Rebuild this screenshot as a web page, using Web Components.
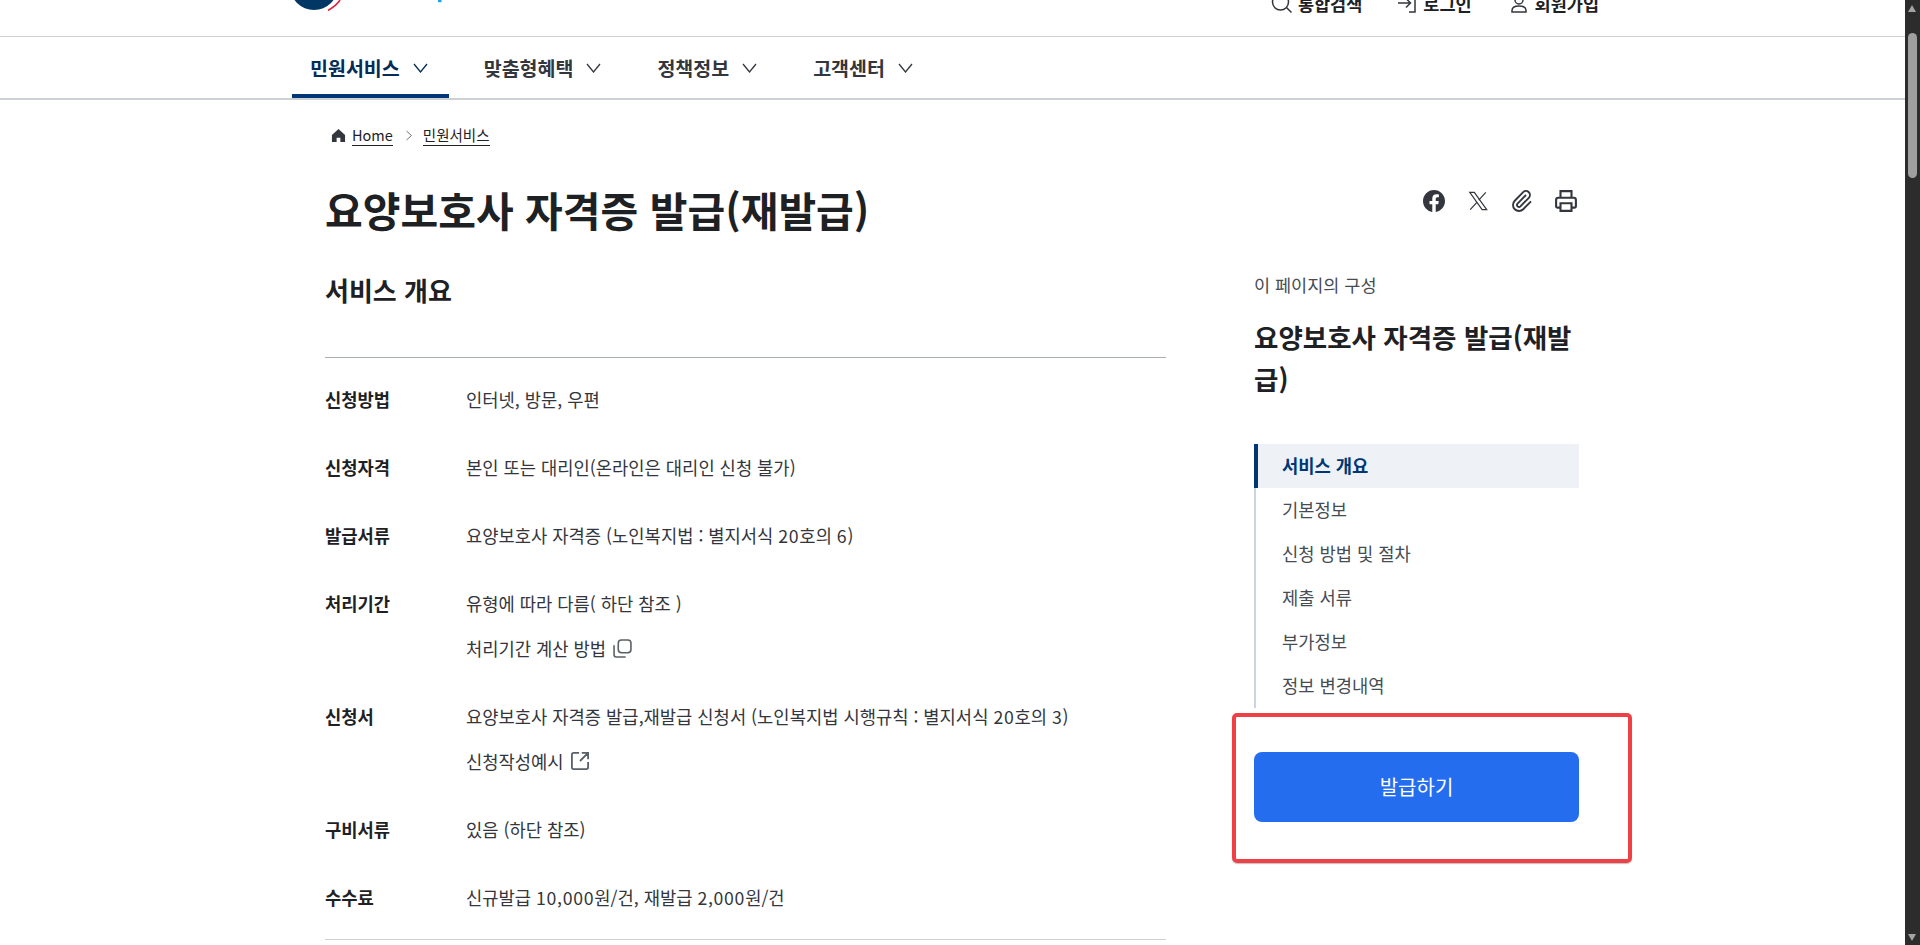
<!DOCTYPE html>
<html lang="ko"><head><meta charset="utf-8"><title>요양보호사 자격증 발급(재발급)</title>
<style>
html,body{margin:0;padding:0;height:945px;overflow:hidden;background:#fff}
body{font-family:"Noto Sans CJK KR","Noto Sans",sans-serif;color:#1e2124;display:flex}
.n{letter-spacing:.7px}
</style></head><body>
<template id="t-header"><style>
:host{display:block;height:36px;border-bottom:1px solid #cdd1d5;overflow:hidden;box-sizing:content-box}
.in{width:1321px;margin-left:292px;height:36px;display:flex;justify-content:space-between;align-items:flex-start}
svg.logo{display:block;width:160px;height:11px;flex:none}
.util{display:flex;gap:35px;height:36px;align-items:flex-end;padding:0 14px 19px 0;box-sizing:border-box}
.i{display:flex;align-items:center;gap:4px;font-size:17.5px;line-height:26px;font-weight:700;color:#1e2124;white-space:nowrap}
.i:first-child{margin-right:-2px}
.i svg{width:24px;height:24px;flex:none;fill:none;stroke:#33363d;stroke-width:1.5}
</style><div class="in">
<svg class="logo" viewBox="0 0 160 11"><circle cx="22" cy="-14" r="24" fill="#003764"/><path d="M36 10.5Q45 5 48 0" stroke="#e0263b" stroke-width="1.6" fill="none"/><rect x="146" y="0" width="3.5" height="2.2" fill="#1ea3e0"/></svg>
<div class="util">
<span class="i"><svg viewBox="0 0 24 24"><circle cx="10.5" cy="10" r="8"/><path d="M16.5 15.5l5 5"/></svg>통합검색</span>
<span class="i"><svg viewBox="0 0 24 24"><path d="M3 11h12M11 6.5l4.500 4.500-4.500 4.500M14 20h6V3h-6"/></svg>로그인</span>
<span class="i"><svg viewBox="0 0 24 24"><circle cx="12" cy="8" r="4"/><path d="M5 20h14v-1.500c0-3-3-4.500-7-4.500s-7 1.500-7 4.500z"/></svg>회원가입</span>
</div></div></template>

<template id="t-mainnav"><style>
:host{display:block;height:61px;border-bottom:2px solid #cdd1d5}
nav{display:flex;gap:17px;width:1321px;margin-left:292px;height:61px}
</style><nav><slot></slot></nav></template>

<template id="t-navitem"><style>
:host{display:flex;align-items:center;gap:13px;height:61px;padding:0 21px 0 18px;box-sizing:border-box;font-size:19.500px;font-weight:600;color:#33363d;white-space:nowrap}
:host([active]){color:#052b57;box-shadow:inset 0 -4px 0 #003675}
svg{width:15px;height:10px;fill:none;stroke:currentColor;stroke-width:1.300}
</style><span><slot></slot></span><svg viewBox="0 0 15 10"><path d="M1 1l6.500 8L14 1"/></svg></template>

<template id="t-crumb"><style>
:host{display:flex;align-items:center;height:26px;font-size:14.500px;color:#1e2124;white-space:nowrap;padding-left:6px}
svg{flex:none}
a{color:inherit;text-decoration:none;border-bottom:1px solid #1e2124;line-height:20px;display:block}
.h{width:15px;height:15px;fill:#33363d;margin-right:6px}
.c{width:8px;height:11px;fill:none;stroke:#6d7882;stroke-width:1;margin:0 10px 0 12px}
</style><svg class="h" viewBox="0 0 16 16"><path d="M8 1l7 6.500V15h-5v-4.500H6V15H1V7.500z"/></svg><a>Home</a><svg class="c" viewBox="0 0 8 11"><path d="M1.500 1l5 4.500-5 4.500"/></svg><a>민원서비스</a></template>

<template id="t-share"><style>
:host{display:flex;gap:22px;align-items:center;margin:11px 2px 0 0}
svg{display:block;width:22px;height:22px;fill:#33363d}
.o{fill:none;stroke:#33363d;stroke-width:1.900}
.x{fill:none;stroke:#33363d;stroke-width:1.300}
</style>
<svg viewBox="0 0 24 24"><path d="M24 12.070C24 5.410 18.630 0 12 0S0 5.410 0 12.070c0 6.020 4.390 11.010 10.130 11.930v-8.440H7.080v-3.490h3.040V9.410c0-3.020 1.800-4.700 4.540-4.700 1.310 0 2.680.24 2.680.24v2.970h-1.500c-1.500 0-1.960.93-1.960 1.890v2.260h3.320l-.53 3.500h-2.800V24C19.620 23.080 24 18.090 24 12.070"/></svg>
<svg class="x" viewBox="0 0 24 24"><path d="M3 2.500h5L21.500 21.500h-5zM20.500 2.500l-7.700 8.500M11 13.200l-7.500 8.300"/></svg>
<svg class="o" viewBox="1 1 22 22"><path d="M16 6l-8.414 8.586a2 2 0 0 0 2.828 2.828l8.414-8.586a4 4 0 0 0-5.656-5.656l-8.415 8.585a6 6 0 1 0 8.486 8.486L21 12.300"/></svg>
<svg class="o" viewBox="2 2 20 20"><path d="M7 9V3h10v6M7 18H4a1 1 0 0 1-1-1v-6a2 2 0 0 1 2-2h14a2 2 0 0 1 2 2v6a1 1 0 0 1-1 1h-3M7 14h10v7H7z"/></svg></template>

<template id="t-row"><style>
:host{display:grid;grid-template-columns:141px 1fr;padding:21px 0;font-size:17.700px;line-height:26px;color:#1e2124}
.l{font-weight:700}
.v{display:flex;flex-direction:column;gap:19px;color:#33363d}
</style><div class="l"><slot name="label"></slot></div><div class="v"><slot></slot></div></template>

<template id="t-line"><style>
:host{display:flex;align-items:center;gap:7px;white-space:pre}
</style><span><slot></slot></span><slot name="icon"></slot></template>

<template id="t-table"><style>
:host{display:block;border-top:1px solid #a9afb5;border-bottom:1px solid #cdd1d5;padding:7px 0 8px}
</style><slot></slot></template>

<template id="t-toc"><style>
:host{display:block;border-left:2px solid #ccd6e3;height:264px}
</style><slot></slot></template>

<template id="t-tocitem"><style>
:host{display:block;height:44px;line-height:42px;font-size:17.700px;color:#464c53;padding-left:26px;box-sizing:border-box}
:host([active]){background:#eef1f5;color:#003675;font-weight:700;margin-left:-2px;border-left:4px solid #003675;padding-left:24px}
</style><slot></slot></template>

<template id="t-button"><style>
:host{display:block;position:relative;height:70px;margin-top:44px;background:#256def;border-radius:8px;color:#fff;font-size:20px;line-height:70px;text-align:center}
.mark{position:absolute;left:-22px;right:-53px;top:-39px;bottom:-41px;border:4px solid #ef4045;border-radius:5px;box-sizing:border-box;box-shadow:0 1px 1px rgba(0,0,0,.25)}
</style><slot></slot><span class="mark"></span></template>

<template id="t-scroll"><style>
:host{display:block;flex:none;width:15px;height:945px;background:#2c2c2c;position:relative}
.u,.d{width:0;height:0;border:4.500px solid transparent;position:absolute;left:3px}
.u{border-bottom:7px solid #a3a3a3;border-top-width:0;top:5px}
.d{bottom:4px;border-top:7px solid #a3a3a3;border-bottom-width:0}
.th{position:absolute;left:3px;width:9px;top:33px;height:145px;border-radius:5px;background:#9f9f9f}
</style><span class="u"></span><span class="th"></span><span class="d"></span></template>

<template id="t-page"><style>
:host{display:block;flex:none;width:1905px;height:945px;overflow:hidden;background:#fff}
.c{width:1321px;margin-left:292px;padding:0 34px 0 33px;box-sizing:border-box}
.b{padding-top:22px}
.tr{display:flex;justify-content:space-between;align-items:flex-start;margin-top:31px;height:60px}
h1{margin:0;font-size:41px;line-height:60px;font-weight:700;color:#1e2124;white-space:nowrap}
.g{display:grid;grid-template-columns:841px 325px;justify-content:space-between;margin-top:34px}
h2{margin:0 0 50px;font-size:26px;line-height:34px;font-weight:700;color:#1e2124}
.lab{font-size:17.500px;line-height:24px;color:#464c53}
h3{margin:19px 0 44px;font-size:26.500px;line-height:42px;font-weight:700;color:#1e2124;word-break:break-all}
</style><slot name="top"></slot><div class="c"><div class="b"><slot name="crumb"></slot></div>
<div class="tr"><h1>요양보호사 자격증 발급(재발급)</h1><slot name="share"></slot></div>
<div class="g"><main><h2>서비스 개요</h2><slot name="table"></slot></main>
<aside><div class="lab">이 페이지의 구성</div><h3>요양보호사 자격증 발급(재발급)</h3><slot name="toc"></slot><slot name="cta"></slot></aside></div></div></template>

<gov-page>
<gov-header slot="top"></gov-header>
<gov-mainnav slot="top"><gov-navitem active>민원서비스</gov-navitem><gov-navitem>맞춤형혜택</gov-navitem><gov-navitem>정책정보</gov-navitem><gov-navitem>고객센터</gov-navitem></gov-mainnav>
<gov-crumb slot="crumb"></gov-crumb>
<gov-share slot="share"></gov-share>
<gov-table slot="table">
<gov-row><span slot="label">신청방법</span><gov-line>인터넷, 방문, 우편</gov-line></gov-row>
<gov-row><span slot="label">신청자격</span><gov-line>본인 또는 대리인(온라인은 대리인 신청 불가)</gov-line></gov-row>
<gov-row><span slot="label">발급서류</span><gov-line>요양보호사 자격증 (노인복지법 : 별지서식 <span class="n">20</span>호의 <span class="n">6</span>)</gov-line></gov-row>
<gov-row><span slot="label">처리기간</span><gov-line>유형에 따라 다름( 하단 참조 )</gov-line><gov-line>처리기간 계산 방법<svg slot="icon" width="19" height="19" viewBox="1 1 18 18" fill="none" stroke="#5a6067" stroke-width="1.500"><rect x="6" y="2" width="12" height="12" rx="3"/><path d="M2 7v9a2 2 0 0 0 2 2h9"/></svg></gov-line></gov-row>
<gov-row><span slot="label">신청서</span><gov-line>요양보호사 자격증 발급,재발급 신청서 (노인복지법 시행규칙 : 별지서식 <span class="n">20</span>호의 <span class="n">3</span>)</gov-line><gov-line>신청작성예시<svg slot="icon" width="18" height="18" viewBox="2 2 20 20" fill="none" stroke="#5a6067" stroke-width="2"><path d="M11 3H5a2 2 0 0 0-2 2v14a2 2 0 0 0 2 2h14a2 2 0 0 0 2-2v-6M14 3h7v7M21 3l-9 9"/></svg></gov-line></gov-row>
<gov-row><span slot="label">구비서류</span><gov-line>있음 (하단 참조)</gov-line></gov-row>
<gov-row><span slot="label">수수료</span><gov-line>신규발급 <span class="n">10,000</span>원/건, 재발급 <span class="n">2,000</span>원/건</gov-line></gov-row>
</gov-table>
<gov-toc slot="toc"><gov-tocitem active>서비스 개요</gov-tocitem><gov-tocitem>기본정보</gov-tocitem><gov-tocitem>신청 방법 및 절차</gov-tocitem><gov-tocitem>제출 서류</gov-tocitem><gov-tocitem>부가정보</gov-tocitem><gov-tocitem>정보 변경내역</gov-tocitem></gov-toc>
<gov-button slot="cta">발급하기</gov-button>
</gov-page>
<gov-scroll></gov-scroll>
<script>
for(const [n,t] of Object.entries({page:'t-page',header:'t-header',mainnav:'t-mainnav',navitem:'t-navitem',crumb:'t-crumb',share:'t-share',table:'t-table',row:'t-row',line:'t-line',toc:'t-toc',tocitem:'t-tocitem',button:'t-button',scroll:'t-scroll'})){
 customElements.define('gov-'+n,class extends HTMLElement{constructor(){super();this.attachShadow({mode:'open'}).appendChild(document.getElementById(t).content.cloneNode(true));}});
}
</script>
</body></html>
